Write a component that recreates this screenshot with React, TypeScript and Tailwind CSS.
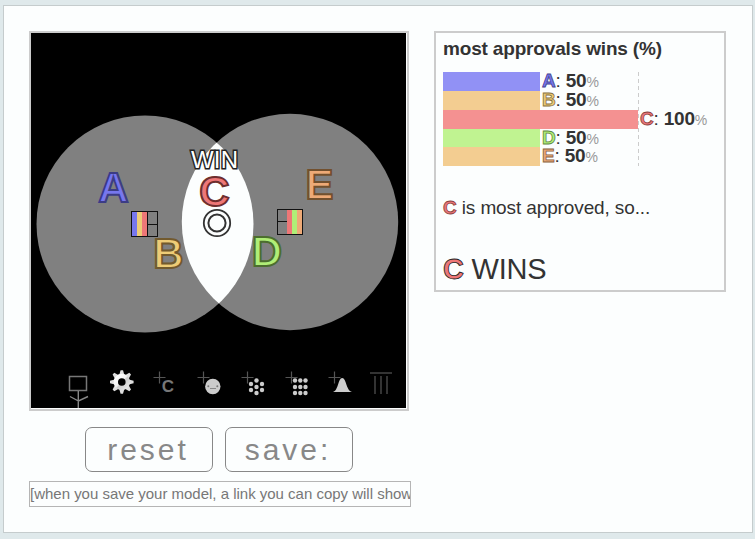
import React from 'react';

type Candidate = { name: string; pct: number; bar: string; fill: string; edge: string; height: string };

const candidates: Candidate[] = [
  { name: 'A', pct: 50, bar: 'bg-[#9191f5] w-[97px]', fill: '#7777ee', edge: '#44448f', height: 'h-[19px]' },
  { name: 'B', pct: 50, bar: 'bg-[#f3cd91] w-[97px]', fill: '#eecc77', edge: '#86703f', height: 'h-[19px]' },
  { name: 'C', pct: 100, bar: 'bg-[#f49191] w-[195px]', fill: '#ee7777', edge: '#8a4040', height: 'h-[19px]' },
  { name: 'D', pct: 50, bar: 'bg-[#c0f391] w-[97px]', fill: '#b0ee77', edge: '#5e863f', height: 'h-[18px]' },
  { name: 'E', pct: 50, bar: 'bg-[#f3cd91] w-[97px]', fill: '#eeaa77', edge: '#86603f', height: 'h-[19px]' },
];

function Letter({ name, fill, edge }: { name: string; fill: string; edge: string }) {
  return (
    <b className="[-webkit-text-stroke-width:0.8px]" style={{ color: fill, WebkitTextStrokeColor: edge }}>
      {name}
    </b>
  );
}

type MapLetterProps = { x: number; y: number; name: string; fill: string; edge: string };

function MapLetter({ x, y, name, fill, edge }: MapLetterProps) {
  return (
    <text x={x} y={y} fontSize="42" fontWeight="bold" textAnchor="middle" fill={fill} stroke={edge} strokeWidth="2" strokeLinejoin="miter">
      {name}
    </text>
  );
}

function Plus({ x, y }: { x: number; y: number }) {
  return <path d={`M${x - 6} ${y}h12M${x} ${y - 6}v12`} stroke="#555" strokeWidth="1.2" fill="none" />;
}

const hexDots = [[256.5, 380.5], [251, 384], [262, 384], [256.5, 387], [251, 390], [262, 390], [256.5, 393]];
const gridDots = [380.5, 387, 393].flatMap((y) => [295, 300.3, 305.5].map((x) => [x, y]));

function Toolbar() {
  return (
    <g>
      <path d="M69.5 376.5h17v14h-17z" fill="none" stroke="#777" strokeWidth="1.5" />
      <path d="M78.3 391v17M70 396.5l8.5 4.5l9.5-4.5" fill="none" stroke="#888" strokeWidth="1.4" />
      <g transform="translate(121.8 382)">
        {[0, 45, 90, 135, 180, 225, 270, 315].map((a) => (
          <path key={a} d="M-2.6-7L-1.2-11.8H1.2L2.6-7z" fill="#dedede" transform={`rotate(${a})`} />
        ))}
        <circle r="6" fill="none" stroke="url(#metal)" strokeWidth="4.4" />
      </g>
      <Plus x={159.5} y={377.5} />
      <text x="168" y="392.3" fontSize="17" fontWeight="bold" textAnchor="middle" fill="#777">C</text>
      <Plus x={203.5} y={377.5} />
      <circle cx="212.8" cy="386.5" r="7.7" fill="#ccc" />
      <path d="M210 388.5h6" stroke="#888" />
      <circle cx="208.3" cy="386.3" r="1" fill="#777" />
      <circle cx="217.3" cy="386.3" r="1" fill="#777" />
      <Plus x={247.5} y={377.5} />
      {hexDots.map(([x, y]) => <circle key={`${x}-${y}`} cx={x} cy={y} r="2.2" fill="#ccc" />)}
      <Plus x={291.5} y={377.5} />
      {gridDots.map(([x, y]) => <circle key={`${x}-${y}`} cx={x} cy={y} r="2.2" fill="#ccc" />)}
      <Plus x={334.5} y={377.5} />
      <path d="M333 392C338.5 390.5 338 378 342.2 378S346 390.5 352 392z" fill="#ccc" />
      <path d="M370 373h22" stroke="#333" strokeWidth="2" />
      <path d="M375 376v18M381 376v18M387 376v18" stroke="#333" strokeWidth="2" />
    </g>
  );
}

function Arena() {
  return (
    <svg className="block h-[376px] w-[376px] bg-[#fcfefe]" viewBox="31 33 376 376">
      <defs>
        <clipPath id="leftArea"><circle cx="145" cy="224" r="108.5" /></clipPath>
        <linearGradient id="metal" x1="0" y1="0" x2="1" y2="1">
          <stop offset="0" stopColor="#fff" />
          <stop offset=".45" stopColor="#f4f4f4" />
          <stop offset=".55" stopColor="#ccc" />
          <stop offset="1" stopColor="#e8e8e8" />
        </linearGradient>
      </defs>
      <path d="M31 33h375v375h-375z" />
      <circle cx="145" cy="224" r="108.5" fill="#808080" />
      <circle cx="290" cy="222" r="108.2" fill="#808080" />
      <circle cx="290" cy="222" r="108.2" fill="#fcfefe" clipPath="url(#leftArea)" />

      <g shapeRendering="crispEdges">
        <path d="M132 211h5v26h-5z" fill="#7777ee" />
        <path d="M137 211h5v26h-5z" fill="#eecc77" />
        <path d="M142 211h5v26h-5z" fill="#ee7777" />
        <path d="M131.5 211.5h26v25h-26zM147.5 211v26M147 224.5h11" fill="none" stroke="#111" />
        <path d="M287 209h5v25h-5z" fill="#ee7777" />
        <path d="M292 209h5v25h-5z" fill="#b0ee77" />
        <path d="M297 209h5v25h-5z" fill="#eeaa77" />
        <path d="M277.5 209.5h25v25h-25zM277 221.5h10" fill="none" stroke="#111" />
      </g>

      <MapLetter x={113.5} y={202.3} name="A" fill="#7777ee" edge="#3c3c85" />
      <MapLetter x={168.5} y={268.3} name="B" fill="#eecc77" edge="#725a2e" />
      <MapLetter x={267} y={266.3} name="D" fill="#b0ee77" edge="#4c6e2e" />
      <MapLetter x={319.5} y={198.5} name="E" fill="#eeaa77" edge="#72502e" />
      <MapLetter x={214.5} y={206.3} name="C" fill="#ee7777" edge="#6e2e2e" />
      <text x="214.5" y="168.3" fontSize="24" textLength="47" textAnchor="middle" fill="#fff" stroke="#222" strokeWidth="3" paintOrder="stroke">WIN</text>
      <circle cx="217" cy="223" r="13.2" fill="#fcfefe" stroke="#333" strokeWidth="1.8" />
      <circle cx="217" cy="223" r="8.6" fill="#fcfefe" stroke="#333" strokeWidth="2" />
      <Toolbar />
    </svg>
  );
}

function Results() {
  return (
    <section className="h-[261px] w-[292px] border-2 border-[#ccc] pl-[7px] text-[#333]">
      <h2 className="h-[39px] pt-[4px] text-[19px] leading-6 font-bold tracking-[-0.17px] whitespace-nowrap">most approvals wins (%)</h2>
      <div className="flex h-[94px] flex-col bg-[repeating-linear-gradient(to_bottom,#ccc_0_4px,transparent_4px_7px)] bg-[length:1px_100%] bg-[position:195px_0] bg-no-repeat">
        {candidates.map((c) => (
          <div key={c.name} className={`flex items-center ${c.height}`}>
            <div className={`h-full shrink-0 ${c.bar}`} />
            <div className="pl-[2px] text-[19px] leading-[18px] tracking-[-0.2px] whitespace-nowrap">
              <Letter name={c.name} fill={c.fill} edge={c.edge} />: <b>{c.pct}</b>
              <span className="text-[14px] text-[#999]">%</span>
            </div>
          </div>
        ))}
      </div>
      <p className="pt-[30px] text-[19px] leading-6 tracking-[-0.12px]">
        <Letter name="C" fill="#ee7777" edge="#8a4040" /> is most approved, so...
      </p>
      <p className="pt-[31px] text-[29px] leading-[36px] tracking-[-0.25px]">
        <Letter name="C" fill="#ee7777" edge="#222" /> WINS
      </p>
    </section>
  );
}

export default function App() {
  return (
    <div className="h-[539px] w-[755px] overflow-hidden bg-[#dfe9eb] pt-[5px] pl-[3px] font-['Liberation_Sans',Arial,sans-serif]">
      <main className="flex h-[528px] w-[750px] gap-[25px] border border-[#c5cccd] bg-[#fcfefe] pt-[25px] pl-[25px]">
        <div className="flex w-[380px] shrink-0 flex-col">
          <div className="h-[380px] w-[380px] border-2 border-[#ccc]">
            <Arena />
          </div>
          <div className="mt-4 flex gap-3 pl-14">
            <button className="h-[45px] w-[128px] rounded-[7px] border border-[#888] pr-[2px] text-[30px] leading-none tracking-[3px] text-[#888]">reset</button>
            <button className="h-[45px] w-[128px] rounded-[7px] border border-[#888] pr-[2px] text-[30px] leading-none tracking-[3px] text-[#888]">save:</button>
          </div>
          <div className="mt-[9px] h-[26px] w-[382px] overflow-hidden border border-[#b5b5b5] text-[15px] leading-[24px] tracking-[-0.01px] whitespace-nowrap text-[#777]">
            [when you save your model, a link you can copy will show up here]
          </div>
        </div>
        <Results />
      </main>
    </div>
  );
}
